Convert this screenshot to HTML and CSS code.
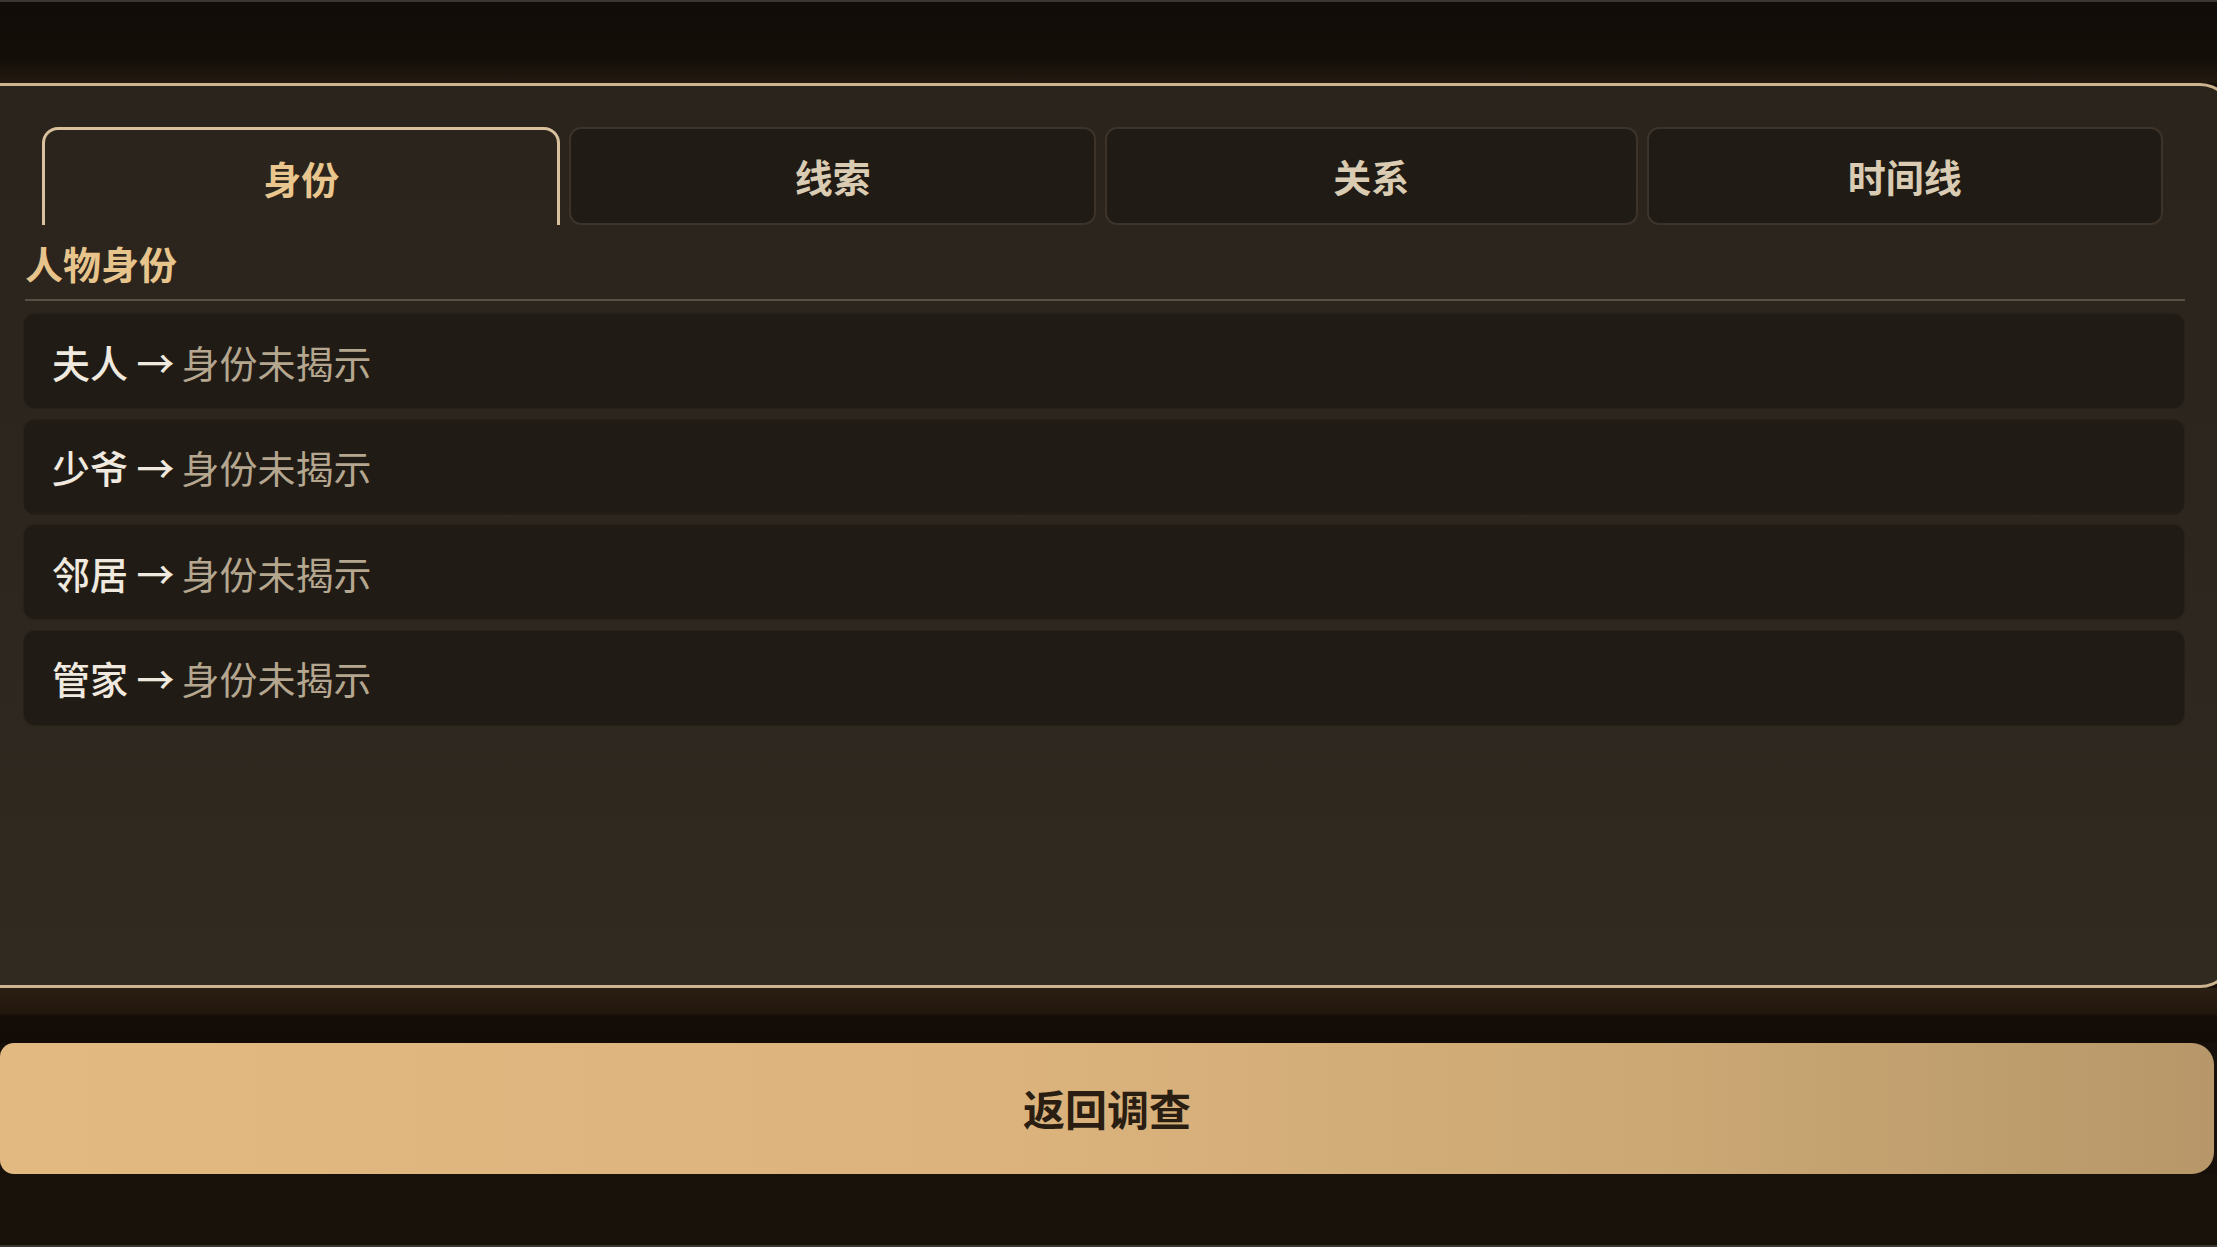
FILE: index.html
```html
<!DOCTYPE html>
<html lang="zh-CN">
<head>
<meta charset="utf-8">
<title>人物身份</title>
<link rel="stylesheet" href="styles.css">
</head>
<body>
<div class="screen">
  <div class="top-area"></div>
  <section class="panel">
    <nav class="tabs">
      <div class="tab tab-active">身份</div>
      <div class="tab">线索</div>
      <div class="tab">关系</div>
      <div class="tab">时间线</div>
    </nav>
    <h2 class="section-title">人物身份</h2>
    <ul class="rows">
      <li class="row"><span class="name">夫人 →</span><span class="status">身份未揭示</span></li>
      <li class="row"><span class="name">少爷 →</span><span class="status">身份未揭示</span></li>
      <li class="row"><span class="name">邻居 →</span><span class="status">身份未揭示</span></li>
      <li class="row"><span class="name">管家 →</span><span class="status">身份未揭示</span></li>
    </ul>
  </section>
  <div class="under-panel"></div>
  <button class="back-btn">返回调查</button>
  <div class="bottom-area"></div>
</div>
</body>
</html>
```
FILE: styles.css
```css
* { box-sizing: border-box; }
html, body {
  margin: 0;
  padding: 0;
  background: #17100a;
  overflow: hidden;
}
body {
  font-family: "Noto Sans CJK SC", "Noto Sans", sans-serif;
}
.screen {
  width: 2217px;
  height: 1247px;
  display: flex;
  flex-direction: column;
  overflow: hidden;
}
.top-area {
  height: 83px;
  flex: none;
  border-top: 2px solid #3d3732;
  background: linear-gradient(180deg, #120c08 0%, #140e09 70%, #231910 100%);
}
.panel {
  flex: none;
  height: 905px;
  width: 2234px;
  border: 3px solid #cdb48e;
  border-left: none;
  border-radius: 0 34px 34px 0;
  background: linear-gradient(180deg, #2a241c 0%, #2c261e 50%, #302a21 100%);
  padding: 41px 46px 0 23px;
}
.tabs {
  display: grid;
  grid-template-columns: 518fr 526fr 532fr 516fr;
  gap: 9px;
  margin: 0 22px 0 19px;
  height: 98px;
}
.tab {
  display: flex;
  align-items: center;
  justify-content: center;
  font-size: 38px;
  font-weight: 700;
  color: #d9ccb3;
  background: #211b16;
  border: 2px solid #3c332a;
  border-radius: 12px;
  padding-bottom: 2px;
}
.tab-active {
  color: #e9c68e;
  background: transparent;
  border: 3px solid #d8c19c;
  border-bottom: none;
  border-radius: 16px 16px 0 0;
  padding-top: 0;
  padding-bottom: 0;
}
.section-title {
  margin: 13px 0 0 2px;
  font-size: 38px;
  line-height: 49px;
  font-weight: 700;
  color: #e7c48c;
  padding-bottom: 12px;
  border-bottom: 2px solid #585044;
}
.rows {
  list-style: none;
  margin: 12px 0 0;
  padding: 0;
  display: flex;
  flex-direction: column;
  gap: 9.5px;
}
.row {
  height: 96px;
  display: flex;
  align-items: center;
  gap: 7px;
  padding-left: 28px;
  border-radius: 12px;
  background: #211b16;
  border: 1px solid #282119;
  font-size: 38px;
}
.name {
  color: #efe9df;
  font-weight: 500;
}
.status {
  color: #b5a78f;
  font-weight: 400;
}
.under-panel {
  height: 55px;
  flex: none;
  background: linear-gradient(180deg, #2b1e12 0%, #23180e 45%, #140d07 52%, #130c06 100%);
}
.back-btn {
  flex: none;
  height: 131px;
  width: 2214px;
  border: none;
  border-radius: 14px 22px 22px 14px;
  background: linear-gradient(90deg, #e2b980 0%, #dcb37d 45%, #cba874 75%, #b79769 100%);
  font-family: "Noto Sans CJK SC", "Noto Sans", sans-serif;
  font-size: 42px;
  font-weight: 700;
  color: #2a1e13;
  padding: 0 0 2px 0;
}
.bottom-area {
  flex: 1;
  background: #19120b;
  border-bottom: 2px solid #3a3632;
}
```
